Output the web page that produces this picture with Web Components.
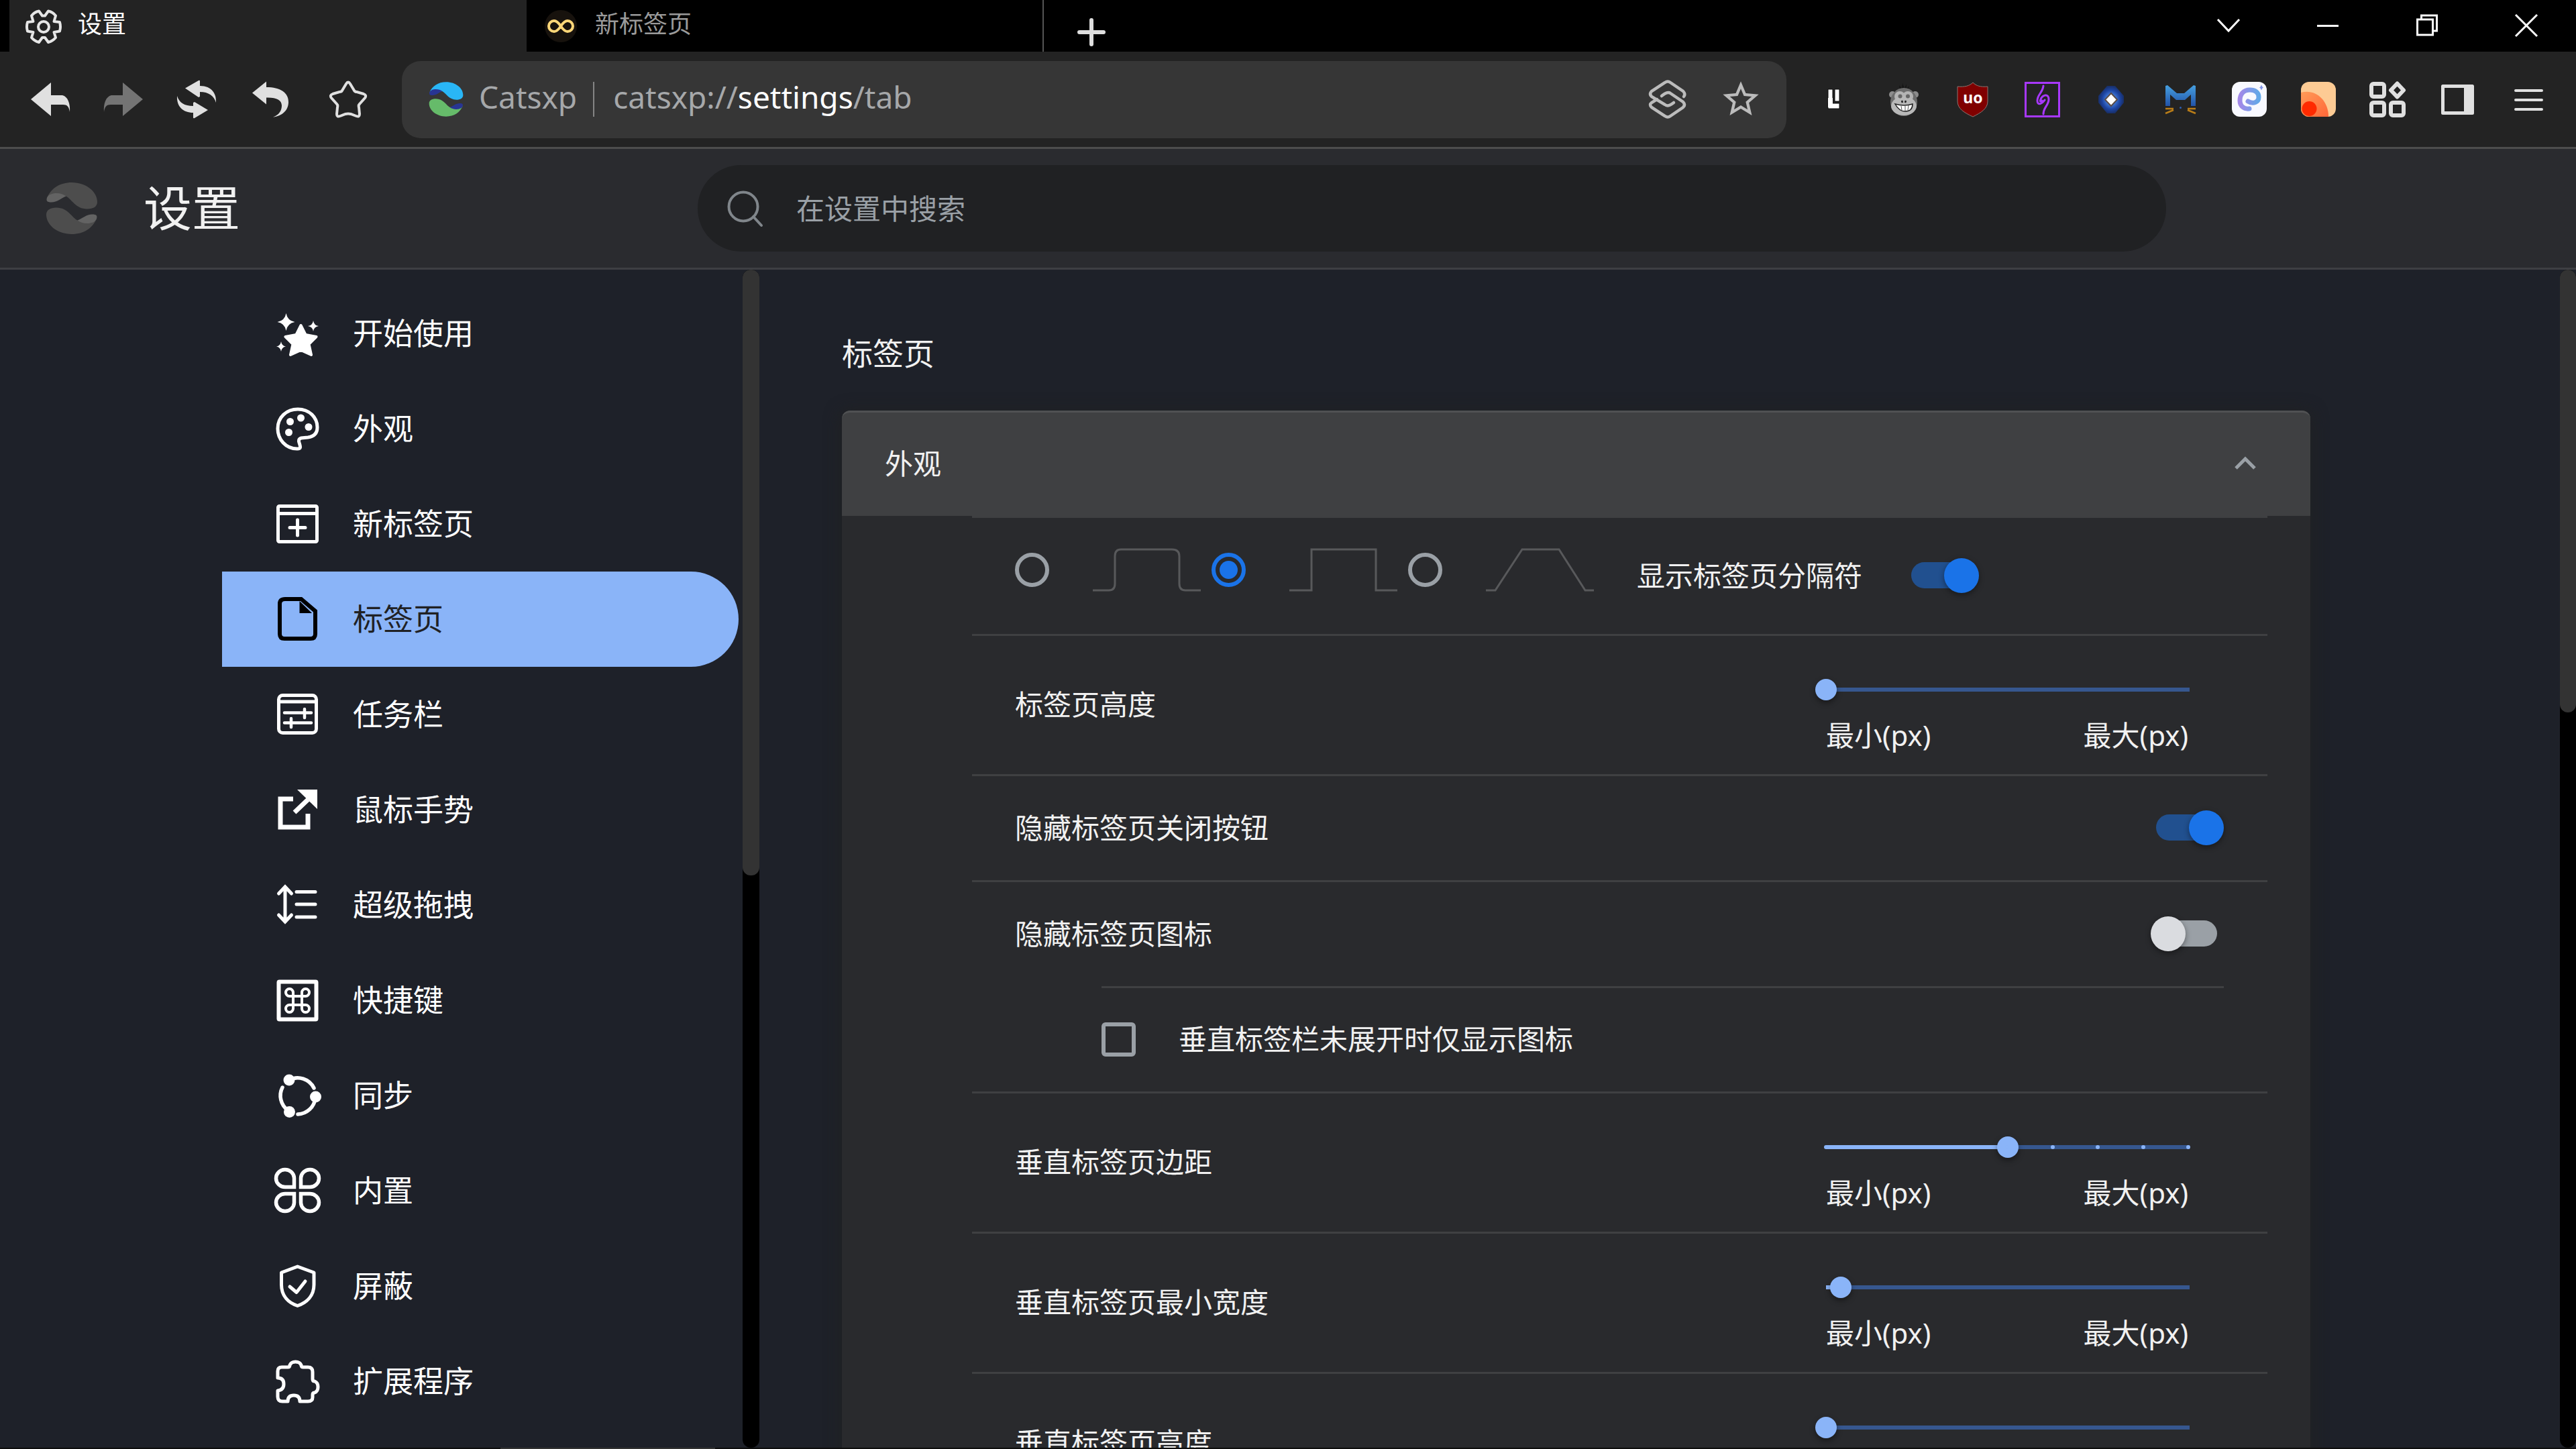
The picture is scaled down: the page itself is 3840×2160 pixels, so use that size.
<!DOCTYPE html>
<html lang="zh-CN">
<head>
<meta charset="utf-8">
<title>设置</title>
<style>
  html, body {
    margin: 0;
    height: 100%;
    background: #1e2129;
  }

  body {
    font-family: "Noto Sans", "Noto Sans CJK SC", sans-serif;
    color: #f1f1f1;
    overflow: hidden;
  }
</style>
</head>
<body>
<settings-app></settings-app>

<script>
const ICONS = {
  gear: `<g fill="none" stroke="#e6e6e6" stroke-width="4" stroke-linejoin="round"><path d="M25 9.5L30 16.5H34L39 9.5Q46 11 50 16.5L47.500 25L56 26Q58 32.500 56 39.500L47.500 41L50 49Q46 54 39 56L34 49H30L25 56Q18 54 14 49L16.500 41L8 39.500Q6 32.500 8 26L16.500 25L14 16.500Q18 11 25 9.500Z"/><circle cx="32" cy="33" r="8"/></g>`,
  infinity: `<circle cx="32" cy="32" r="24" fill="#17120d"/><path d="M32 32C28 26 25 24 22 24a8 8 0 0 0 0 16c3 0 6-2 10-8s7-8 10-8a8 8 0 0 1 0 16c-3 0-6-2-10-8z" fill="none" stroke="#ffd778" stroke-width="4"/>`,
  plus: `<path d="M32 14v36M14 32h36" stroke="#dedede" stroke-width="6" stroke-linecap="round"/>`,
  down: `<path d="M16 22l16 17 16-17" fill="none" stroke="#fff" stroke-width="3"/>`,
  minimize: `<path d="M16 31.500h32" stroke="#fff" stroke-width="3"/>`,
  restore: `<path d="M17.500 22h23v23h-23zM23.500 21v-5h23v23h-5" fill="none" stroke="#fff" stroke-width="3"/>`,
  close: `<path d="M16 15l32 32M48 15L16 47" stroke="#fff" stroke-width="3"/>`,
  back: `<path d="M3 32L33 7v19h17c8 2 12 12 11 25-1-8-4-11-10-11H33v17z" fill="#e0e0e0"/>`,
  forward: `<path d="M61 32L31 7v19H14C6 28 2 38 3 51c1-8 4-11 10-11h18v17z" fill="#747474"/>`,
  reload: `<path d="M15 15.500L35 4q2-1 2 1v7c18 0 25 12 24 25-3-10-11-16-24-16v7l-2 1zM49 48L29 60q-2 1-2-1v-7C12 52 2 43 3 27c3 10 11 15 24 15v-5l2-1z" fill="#e0e0e0"/>`,
  undo: `<path d="M6 22.500L27 5.500V14c21 0 33 8 33 22 0 13-10 21-23 22.500 9-3 13-10 13-17C50 33 42 29 27 29.500v10z" fill="#e0e0e0"/>`,
  favorite: `<path d="M29 9q3-5 6 0l6 10q1 2 4 2l10 3q5 2 2 6l-8 9q-2 2-1 5l1 10q0 5-5 3l-8-3q-4-1-8 0l-8 3q-5 2-5-3l1-10q1-3-1-5l-8-9q-3-4 2-6l10-3q3 0 4-2z" fill="none" stroke="#e0e0e0" stroke-width="4"/>`,
  leo: `<path d="M56 28q3-4-1-8L36 7q-4-3-8 0L8 20q-4 4 0 8l20 12q4 4 13-3M23 27q9-7 13-4l19 13q4 4 0 8L36 57q-4 3-8 0L8 44q-4-4 0-7l8-5" fill="none" stroke="#bcbcbc" stroke-width="4.500" stroke-linecap="round"/>`,
  bookmark: `<path transform="scale(2.667)" fill="#bcbcbc" d="M22 9.240l-7.190-.620L12 2 9.190 8.630 2 9.240l5.460 4.730L5.820 21 12 17.270 18.180 21l-1.630-7.030L22 9.240zM12 15.400l-3.760 2.270 1-4.280-3.320-2.880 4.380-.380L12 6.100l1.710 4.040 4.380.380-3.320 2.880 1 4.280L12 15.400z"/>`,
  blocks: `<g fill="#fff" stroke="#0c0c0c" stroke-width="1"><rect x="22" y="17" width="7" height="24"/><rect x="32" y="17" width="7" height="18"/><rect x="22" y="38" width="17" height="8"/></g><rect x="22" y="30" width="7" height="14" fill="#fff"/>`,
  monkey: `<g><path d="M26 18l-1-7 4 5 1-8 3 8 3-7 0 8 4-5-2 8z" fill="#161616"/><circle cx="15" cy="25" r="5" fill="#8c8c8c"/><circle cx="49" cy="25" r="5" fill="#8c8c8c"/><ellipse cx="32" cy="36" rx="20" ry="21" fill="#6d6d6d"/><circle cx="26" cy="28" r="8" fill="#b4b4b4"/><circle cx="38" cy="28" r="8" fill="#b4b4b4"/><ellipse cx="32" cy="42" rx="19" ry="14" fill="#b8b8b8"/><circle cx="26.500" cy="27.500" r="3" fill="#666"/><circle cx="38" cy="27.500" r="3" fill="#666"/><path d="M29 34l1 3M35 34l-1 3" stroke="#222" stroke-width="2.500"/><path d="M19 39q14 4 26 0 0 11-11 11-9 0-15-11z" fill="#fff" stroke="#222" stroke-width="1.500"/><path d="M28 42l1 6M34 42v7M39 41l-1 7" stroke="#555" stroke-width="1"/></g>`,
  shieldRed: `<path d="M32 7c5 5 11 7 22 6v22c0 11-10 17-22 23C19 52 9 46 9 35V13c11 1 18-1 23-6z" fill="#800000" stroke="#8d7470" stroke-width="1"/><text x="32" y="38" font-family="Noto Sans" font-weight="700" font-size="23" text-anchor="middle" fill="#fff">uo</text>`,
  swirl: `<g fill="none" stroke="#a838ff" stroke-width="3"><rect x="7.500" y="7.500" width="50" height="50"/><path d="M34 12C33 22 25 25 25 34c0 8 7 5 11-1M34 54c0-10 8-13 8-22s-9-7-12 0q-2 5 2 2" stroke-linecap="round"/></g>`,
  diamond: `<defs><radialGradient id="g"><stop offset=".3" stop-color="#4a8af0"/><stop offset=".7" stop-color="#1c48b0"/><stop offset="1" stop-color="#17306f"/></radialGradient></defs><path d="M26 12h12l13 15v10L38 53H26L13 37V27z" fill="url(#g)" opacity=".9"/><path d="M32 23l9 9.500-9 9.500-9-9.500z" fill="#fff" stroke="#5a4c48" stroke-width="2"/>`,
  cat: `<defs><linearGradient id="g" x2="0" y2="1"><stop stop-color="#46a0e0"/><stop offset="1" stop-color="#2253a8"/></linearGradient></defs><path d="M10 42V12l3-1 14 12h11l14-12 3 1v30h-7V25l-9 8H26l-9-8v17z" fill="url(#g)"/><path d="M10 46h12M22 48l-12 5M55 46H43M43 48l12 5" stroke="#b87c18" stroke-width="2.500"/><circle cx="32.500" cy="44.500" r="1.500" fill="#2d5fb4"/>`,
  spiral: `<defs><linearGradient id="g"><stop stop-color="#a288e8"/><stop offset="1" stop-color="#62a8e8"/></linearGradient></defs><rect x="6" y="6" width="52" height="52" rx="12" fill="#f8f9ff"/><path d="M30 35c8 5 16 1 16-6 0-8-6-11-13-11-10 0-15 7-15 16 0 8 6 13 14 12" fill="none" stroke="url(#g)" stroke-width="7" stroke-linecap="round"/><path d="M50 10.500l1.500 3 1.500 1-1.500 1-1.500 3-1.500-3-1.500-1 1.500-1z" fill="#8296e8"/>`,
  sunset: `<defs><clipPath id="c"><rect x="6" y="6" width="52" height="52" rx="12"/></clipPath><linearGradient id="g" x2="1" y2="1"><stop stop-color="#ff9b58"/><stop offset="1" stop-color="#ff6638"/></linearGradient></defs><g clip-path="url(#c)"><path d="M6 6h52v52H6z" fill="#fdcb94"/><path d="M6 22c22-6 42 12 41 38H6z" fill="url(#g)"/><circle cx="18.500" cy="46" r="11" fill="#ff2a00"/></g>`,
  apps: `<g fill="none" stroke="#e0e0e0" stroke-width="6"><rect x="8" y="9" width="19" height="19" rx="3"/><rect x="8" y="37" width="19" height="19" rx="3"/><rect x="37" y="37" width="19" height="19" rx="3"/><path d="M46.500 8.500l9.500 10-9.500 10-9.500-10z" stroke-linejoin="round"/></g>`,
  sidebar: `<path d="M10.500 12.500h44v40h-44z" fill="none" stroke="#e0e0e0" stroke-width="5" stroke-linejoin="round"/><path d="M42 12h13v41H42z" fill="#e0e0e0"/>`,
  menu: `<path d="M13 19h39M13 33h39M13 47h39" stroke="#e0e0e0" stroke-width="4" stroke-linecap="round"/>`,
  search: `<g fill="none" stroke="#80868b" stroke-width="4"><circle cx="29" cy="29" r="21.500"/><path d="M44 44l12 13" stroke-linecap="round"/></g>`,
  collapse: `<path d="M18 39l14-14 14 14" fill="none" stroke="#9aa0a6" stroke-width="5"/>`,
  start: `<path d="M37.500 20l7 14 16 3-11 11 3.500 16-15.500-7-15.500 7 3.500-16-11-11 16-3z" fill="currentColor" stroke="currentColor" stroke-width="4" stroke-linejoin="round"/><path d="M15.500 2q2 11 13 13-11 2-13 13-2-11-13-13 11-2 13-13zM56 13q1 7 8 8-7 1-8 8-1-7-8-8 7-1 8-8zM8 44q1 6.500 7 7.500-6 1-7 7.500-1-6.500-7-7.500 6-1 7-7.500z" fill="currentColor"/>`,
  palette: `<path d="M3 32C3 15 16 3 33 3c17 0 29 12 29 27 0 11-7 14-14 15l-10 1c-4 1-4 4-3 7 2 6 3 9-3 9C15 62 3 48 3 32z" fill="none" stroke="currentColor" stroke-width="5"/><g fill="currentColor"><circle cx="21.500" cy="21.500" r="5.500"/><circle cx="37.500" cy="16" r="5.500"/><circle cx="49" cy="29.500" r="5.500"/><circle cx="19.500" cy="37.500" r="5.500"/></g>`,
  newtab: `<g fill="none" stroke="currentColor" stroke-width="5"><rect x="3.500" y="5.500" width="58" height="53" rx="2"/><path d="M4 16.500h57"/><path d="M32.500 26v23M21 37.500h23" stroke-linecap="round"/></g>`,
  tab: `<path d="M14 2h24l21 18v34q0 7-7 7H13q-7 0-7-7V9q0-7 8-7z" fill="none" stroke="#000" stroke-width="6"/><path d="M35.500 5v18H54z" fill="#000"/>`,
  taskbar: `<g fill="none" stroke="currentColor" stroke-width="5"><rect x="4.500" y="3.500" width="56" height="56" rx="6"/><path d="M7 13h51"/><path d="M13 29.500h40M43 24v13M13 44.500h40M23 38v13" stroke-linecap="round" stroke-width="4.500"/></g>`,
  gesture: `<path d="M26 16H7v42h41V38M28 36l20-19" fill="none" stroke="currentColor" stroke-width="7"/><path d="M32 2h30v29z" fill="currentColor"/>`,
  drag: `<path d="M14 5v52M4.500 15L14 5l9.500 10M4.500 47L14 57l9.500-10M31 12.500h28M31 31h28M31 50h28" fill="none" stroke="currentColor" stroke-width="5" stroke-linecap="round"/>`,
  shortcut: `<g fill="none" stroke="currentColor"><rect x="4.500" y="4.500" width="56" height="56" rx="1" stroke-width="6"/><path d="M26 26h-5.500a5.500 5.500 0 1 1 5.500-5.500v24a5.500 5.500 0 1 1-5.500-5.500h24a5.500 5.500 0 1 1-5.500 5.500v-24a5.500 5.500 0 1 1 5.500 5.500z" stroke-width="4"/></g>`,
  sync: `<path d="M20 9a27 27 0 0 1 37 12M59 36a27 27 0 0 1-26 24M10 20a27 27 0 0 0 8 34" fill="none" stroke="currentColor" stroke-width="5.500" stroke-linecap="round"/><g fill="currentColor"><circle cx="20" cy="9" r="8.500"/><circle cx="59.500" cy="34" r="8.500"/><circle cx="20.500" cy="56.500" r="8.500"/></g>`,
  clover: `<path d="M27.500 26.500H14A13.500 13 0 1 1 27.500 13zM37.500 26.500H51A13.500 13 0 1 0 37.500 13zM27.500 36.500H14A13.500 13 0 1 0 27.500 50zM37.500 36.500H51A13.500 13 0 1 1 37.500 50z" fill="none" stroke="currentColor" stroke-width="5.500"/>`,
  shield: `<path d="M32.500 3L57 12v18c0 17-11 27-24.500 31.500C19 57 8.500 47 8.500 30V12zM21 33l10 8.500L44 25" fill="none" stroke="currentColor" stroke-width="5" stroke-linecap="round" stroke-linejoin="round"/>`,
  puzzle: `<path d="M9 11h9q3 0 3-3 2-5 8.500-5T38 8q0 3 3 3h7q7 0 7 7v11q0 3 3 3 5 2 5 8.500T58 49q-3 0-3 3v4q0 6-7 6H36q0-9-9-9t-9 9h-8q-7 0-7-7V46q9-1 9-10t-9-9V17q0-6 6-6z" fill="none" stroke="currentColor" stroke-width="5" stroke-linejoin="round"/>`
};

class UiIcon extends HTMLElement {
  connectedCallback() {
    this.attachShadow({ mode: 'open' }).innerHTML = `
      <style>
        :host { display: block; flex: none; width: 64px; height: 64px; }
        svg { display: block; width: 100%; height: 100%; overflow: visible; }
      </style>
      <svg viewBox="0 0 64 64" aria-hidden="true">${ICONS[this.getAttribute('name')]}</svg>`;
  }
}

class BrandLogo extends HTMLElement {
  connectedCallback() {
    this.attachShadow({ mode: 'open' }).innerHTML = `
      <style>
        :host { display: block; flex: none; width: 78px; height: 77px; }
        svg { display: block; width: 100%; height: 100%; }
        .top { fill: var(--logo-top, #4d4d4d); }
        .bottom { fill: var(--logo-bottom, #4d4d4d); }
        .fold { fill: var(--logo-fold, #636363); }
      </style>
      <svg viewBox="0 0 78 77" aria-hidden="true">
        <defs>
          <path id="wing" d="M2 23C8 9 21 0 39 0c22 0 38 14 38 29 0 7-6 10.500-15 10.500C45 39.500 39 25 30.500 20.500z"/>
          <path id="fold" d="M2 23c2-5 8-7 14-7 6 0 11 2 14.500 4.500-8 3-13 9-22 9-6 0-8-2-6.500-6.500z"/>
        </defs>
        <use href="#wing" class="top"/><use href="#fold" class="fold"/>
        <g transform="rotate(180 39 38.500)"><use href="#wing" class="bottom"/><use href="#fold" class="fold"/></g>
      </svg>`;
  }
}

class IconButton extends HTMLElement {
  connectedCallback() {
    this.attachShadow({ mode: 'open' }).innerHTML = `
      <style>
        :host { display: flex; flex: none; width: 103px; }
        button {
          flex: 1;
          display: flex;
          align-items: center;
          justify-content: center;
          padding: 0;
          border: 0;
          background: none;
        }
      </style>
      <button type="button" aria-label="${this.getAttribute('label')}">
        <ui-icon name="${this.getAttribute('icon')}"></ui-icon>
      </button>`;
  }
}

class TabStrip extends HTMLElement {
  connectedCallback() {
    this.attachShadow({ mode: 'open' }).innerHTML = `
      <style>
        :host { display: flex; height: 77px; padding-left: 14px; background: #000; }
        .tab {
          flex: 0 1 771px;
          display: flex;
          align-items: center;
          gap: 19px;
          padding: 0 19px;
          border: 0;
          background: none;
          color: #9a9a9a;
          font: inherit;
          font-size: 36px;
          line-height: 56px;
        }
        .tab span { padding-bottom: 6px; }
        .tab[aria-selected="true"] { background: #232323; color: #fff; }
        .tab:last-of-type { border-right: 2px solid #555; }
        .tabs { display: contents; }
        .add { width: 142px; padding-top: 18px; }
        .window { display: flex; margin-left: auto; }
        .window icon-button { width: 148px; }
      </style>
      <div class="tabs" role="tablist">
        <button class="tab" role="tab" aria-selected="true"><ui-icon name="gear"></ui-icon><span>设置</span></button>
        <button class="tab" role="tab" aria-selected="false"><ui-icon name="infinity"></ui-icon><span>新标签页</span></button>
      </div>
      <icon-button class="add" icon="plus" label="打开新标签页"></icon-button>
      <div class="window">
        <icon-button icon="down" label="搜索标签页"></icon-button>
        <icon-button icon="minimize" label="最小化"></icon-button>
        <icon-button icon="restore" label="还原"></icon-button>
        <icon-button icon="close" label="关闭"></icon-button>
      </div>`;
  }
}

class BrowserToolbar extends HTMLElement {
  connectedCallback() {
    const buttons = (list) => list.map(([icon, label]) =>
      `<icon-button icon="${icon}" label="${label}"></icon-button>`).join('');

    this.attachShadow({ mode: 'open' }).innerHTML = `
      <style>
        :host {
          display: flex;
          height: 142px;
          padding: 0 18px 0 20px;
          align-items: center;
          background: #232323;
          border-bottom: 3px solid #4d4d4d;
        }
        .nav, .extensions, .app { display: flex; }
        .nav icon-button { width: 109px; }
        .nav icon-button:last-child { padding-left: 8px; }
        .app icon-button { width: 106px; }
        .url {
          flex: 1;
          display: flex;
          align-items: center;
          height: 115px;
          margin: 0 20px 0 26px;
          padding: 0 14px 0 40px;
          border-radius: 28px;
          background: #363636;
          color: #a6a8aa;
          font-size: 46px;
          line-height: 64px;
        }
        .url brand-logo {
          width: 52px;
          height: 52px;
          --logo-top: #29b6f6;
          --logo-bottom: #66bb6a;
          --logo-fold: #283593;
        }
        .name { margin-left: 23px; padding-right: 24px; }
        .address {
          flex: 1;
          padding-left: 30px;
          background: linear-gradient(#858585, #858585) no-repeat left center / 2px 52px;
        }
        .name span, .address span { display: inline-block; padding-bottom: 8px; }
        b { font-weight: 400; color: #fff; }
        .url icon-button { width: 109px; }
      </style>
      <div class="nav">${buttons([['back', '后退'], ['forward', '前进'], ['reload', '重新加载'], ['undo', '恢复'], ['favorite', '收藏']])}</div>
      <div class="url">
        <brand-logo></brand-logo>
        <div class="name"><span>Catsxp</span></div>
        <div class="address" role="textbox" aria-label="地址栏"><span>catsxp://<b>settings</b>/tab</span></div>
        ${buttons([['leo', '助手'], ['bookmark', '书签']])}
      </div>
      <div class="extensions">${buttons([['blocks', '扩展 1'], ['monkey', '扩展 2'], ['shieldRed', '扩展 3'], ['swirl', '扩展 4'], ['diamond', '扩展 5'], ['cat', '扩展 6'], ['spiral', '扩展 7'], ['sunset', '扩展 8'], ['apps', '扩展程序']])}</div>
      <div class="app">${buttons([['sidebar', '侧边栏'], ['menu', '菜单']])}</div>`;
  }
}

class SettingsHeader extends HTMLElement {
  connectedCallback() {
    this.attachShadow({ mode: 'open' }).innerHTML = `
      <style>
        :host {
          display: grid;
          grid-template-columns: 1040px minmax(0, 2189px);
          align-items: center;
          height: 177px;
          background: #2a2b2f;
          border-bottom: 3px solid #3e3f43;
        }
        .brand { display: flex; align-items: center; gap: 68px; padding-left: 68px; }
        h1 { margin: 0; padding-bottom: 4px; font-size: 72px; line-height: 96px; font-weight: 400; }
        label {
          display: flex;
          align-items: center;
          gap: 44px;
          height: 129px;
          padding-left: 39px;
          border-radius: 65px;
          background: #202123;
        }
        input {
          flex: 1;
          min-width: 0;
          padding: 0;
          border: 0;
          outline: 0;
          background: none;
          color: inherit;
          font: inherit;
          font-size: 42px;
          line-height: 64px;
        }
        input::placeholder { color: #9aa0a6; opacity: 1; }
      </style>
      <div class="brand"><brand-logo></brand-logo><h1>设置</h1></div>
      <label><ui-icon name="search"></ui-icon><input type="search" placeholder="在设置中搜索" aria-label="在设置中搜索"></label>`;
  }
}

// Scroll rail; --thumb is the share of the rail that the thumb covers
class ScrollRail extends HTMLElement {
  connectedCallback() {
    this.attachShadow({ mode: 'open' }).innerHTML = `
      <style>
        :host { display: block; flex: none; width: 24px; background: #000; border-radius: 12px; }
        div { height: var(--thumb); background: #333; border-radius: 12px; }
      </style>
      <div></div>`;
  }
}

class SettingsMenu extends HTMLElement {
  connectedCallback() {
    const items = [
      ['start', '开始使用'], ['palette', '外观'], ['newtab', '新标签页'], ['tab', '标签页'],
      ['taskbar', '任务栏'], ['gesture', '鼠标手势'], ['drag', '超级拖拽'], ['shortcut', '快捷键'],
      ['sync', '同步'], ['clover', '内置'], ['shield', '屏蔽'], ['puzzle', '扩展程序']
    ];

    this.attachShadow({ mode: 'open' }).innerHTML = `
      <style>
        :host { display: flex; min-height: 0; overflow: hidden; }
        nav { flex: 1; padding: 24px 6px 0 331px; }
        a {
          display: flex;
          align-items: center;
          gap: 51px;
          height: 142px;
          box-sizing: border-box;
          padding-left: 80px;
          border-radius: 0 71px 71px 0;
          color: #fff;
          font-size: 45px;
          line-height: 64px;
          text-decoration: none;
        }
        a[aria-current] { background: #8ab4f8; color: #202124; }
        scroll-rail { width: 25px; --thumb: 51.4%; }
      </style>
      <nav>${items.map(([icon, text]) => `
        <a href="#${icon}" ${icon === 'tab' ? 'aria-current="page"' : ''}><ui-icon name="${icon}"></ui-icon>${text}</a>`).join('')}
      </nav>
      <scroll-rail></scroll-rail>`;
  }
}

const toggleStyles = `
  input[role="switch"] {
    appearance: none;
    flex: none;
    display: flex;
    align-items: center;
    width: 91px;
    height: 39px;
    margin: 0;
    border-radius: 20px;
    background: #9aa0a6;
  }
  input[role="switch"]::before {
    content: "";
    width: 52px;
    height: 52px;
    flex: none;
    margin-left: -8px;
    border-radius: 50%;
    background: #dadce0;
    box-shadow: 0 3px 8px rgba(0, 0, 0, 0.4);
  }
  input[role="switch"]:checked { background: #21508f; }
  input[role="switch"]:checked::before { margin-left: 49px; background: #1a73e8; }
`;

class TabShapeRow extends HTMLElement {
  connectedCallback() {
    const shapes = [
      ['圆角', 'M0 63h24q9 0 9-10V12q0-10 9-10h76q11 0 11 10v41q0 10 9 10h23'],
      ['直角', 'M0 63h33V2h96v61h32'],
      ['梯形', 'M0 63h14L54 2h55l39 61h13']
    ];

    this.attachShadow({ mode: 'open' }).innerHTML = `
      <style>
        ${toggleStyles}
        :host {
          display: flex;
          align-items: center;
          height: 173px;
          padding: 0 64px;
          border-top: 3px solid #3f4042;
        }
        .shapes { display: flex; gap: 16px; padding-bottom: 18px; }
        .shapes label { display: flex; align-items: center; gap: 65px; }
        svg { display: block; width: 161px; height: 65px; }
        path { fill: none; stroke: #58595b; stroke-width: 3; }
        input[type="radio"] {
          appearance: none;
          display: grid;
          place-items: center;
          box-sizing: border-box;
          width: 51px;
          height: 51px;
          margin: 0;
          border: 6px solid #9aa0a6;
          border-radius: 50%;
        }
        input[type="radio"]:checked { border-color: #1a73e8; }
        input[type="radio"]:checked::before {
          content: "";
          width: 27px;
          height: 27px;
          border-radius: 50%;
          background: #1a73e8;
        }
        .separator {
          display: flex;
          align-items: center;
          gap: 73px;
          margin-left: 64px;
          padding-bottom: 2px;
          font-size: 42px;
          line-height: 64px;
        }
      </style>
      <div class="shapes" role="radiogroup" aria-label="标签页形状">${shapes.map(([name, d], i) => `
        <label><input type="radio" name="shape" aria-label="${name}" ${i === 1 ? 'checked' : ''}><svg viewBox="0 0 161 65"><path d="${d}"/></svg></label>`).join('')}
      </div>
      <label class="separator">显示标签页分隔符<input type="checkbox" role="switch" checked></label>`;
  }
}

class ToggleRow extends HTMLElement {
  connectedCallback() {
    this.attachShadow({ mode: 'open' }).innerHTML = `
      <style>
        ${toggleStyles}
        :host { display: block; border-top: 3px solid #3f4042; }
        label {
          display: flex;
          align-items: center;
          justify-content: space-between;
          height: 153px;
          padding: 0 75px 2px 64px;
          font-size: 42px;
          line-height: 64px;
        }
        ::slotted(*) { margin: 0 65px 0 193px; }
      </style>
      <label>${this.getAttribute('label')}<input type="checkbox" role="switch" ${this.hasAttribute('checked') ? 'checked' : ''}></label>
      <slot></slot>`;
  }
}

class CheckRow extends HTMLElement {
  connectedCallback() {
    this.attachShadow({ mode: 'open' }).innerHTML = `
      <style>
        :host { display: block; border-top: 3px solid #3f4042; }
        label {
          display: flex;
          align-items: center;
          gap: 64px;
          height: 152px;
          padding-bottom: 2px;
          font-size: 42px;
          line-height: 64px;
        }
        input {
          appearance: none;
          box-sizing: border-box;
          width: 51px;
          height: 51px;
          margin: 0;
          border: 6px solid #9aa0a6;
          border-radius: 6px;
        }
      </style>
      <label><input type="checkbox"><slot></slot></label>`;
  }
}

class SliderRow extends HTMLElement {
  connectedCallback() {
    const value = Number(this.getAttribute('value'));
    const ticks = Number(this.getAttribute('ticks') || 0);

    this.attachShadow({ mode: 'open' }).innerHTML = `
      <style>
        :host {
          display: flex;
          justify-content: space-between;
          align-items: center;
          height: 206px;
          padding: 0 100px 0 64px;
          border-top: 3px solid #3f4042;
        }
        label { padding-bottom: 2px; font-size: 42px; line-height: 64px; }
        .slider { display: grid; width: 574px; padding-top: 38px; }
        input, .ticks { grid-area: 1 / 1; }
        input {
          appearance: none;
          width: 100%;
          height: 32px;
          margin: 0;
          background:
            linear-gradient(#8ab4f8, #8ab4f8) no-repeat 16px 13px / calc((100% - 32px) * ${value / 100}) 6px,
            linear-gradient(#36578f, #36578f) no-repeat 16px 13px / calc(100% - 32px) 6px;
        }
        input::-webkit-slider-thumb {
          appearance: none;
          width: 32px;
          height: 32px;
          border-radius: 50%;
          background: #8ab4f8;
          box-shadow: 0 4px 8px rgba(0, 0, 0, 0.4);
        }
        .ticks {
          display: flex;
          justify-content: space-between;
          align-items: center;
          padding: 0 15px 0 13px;
          pointer-events: none;
        }
        .ticks i { width: 6px; height: 6px; border-radius: 50%; background: #8ab4f8; }
        .bounds {
          display: flex;
          justify-content: space-between;
          padding: 20px 18px 0 16px;
          font-size: 42px;
          line-height: 64px;
        }
      </style>
      <label for="range">${this.getAttribute('label')}</label>
      <div class="slider">
        <input id="range" type="range" min="0" max="100" step="any" value="${value}">
        <div class="ticks">${'<i></i>'.repeat(ticks)}</div>
        <div class="bounds"><span>最小(px)</span><span>最大(px)</span></div>
      </div>`;
  }
}

class SettingsCard extends HTMLElement {
  connectedCallback() {
    this.attachShadow({ mode: 'open' }).innerHTML = `
      <style>
        :host {
          display: block;
          border-radius: 12px;
          background: #292a2d;
          box-shadow: 0 3px 20px 6px rgba(32, 33, 36, 0.9);
        }
        button {
          display: flex;
          align-items: center;
          justify-content: space-between;
          width: 100%;
          height: 157px;
          padding: 0 65px 2px 64px;
          border: 0;
          border-top: 3px solid #505153;
          border-radius: 12px 12px 0 0;
          background: #3f4042;
          color: inherit;
          font: inherit;
          font-size: 42px;
          line-height: 64px;
        }
        .rows { padding: 0 64px 0 194px; }
      </style>
      <button type="button" aria-expanded="true">${this.getAttribute('label')}<ui-icon name="collapse"></ui-icon></button>
      <div class="rows"><slot></slot></div>`;
  }
}

class SettingsPage extends HTMLElement {
  connectedCallback() {
    this.attachShadow({ mode: 'open' }).innerHTML = `
      <style>
        :host { display: flex; min-width: 0; min-height: 0; overflow: hidden; }
        main { flex: 1; min-width: 0; padding: 94px 123px 0; }
        section { max-width: 2189px; }
        h2 { margin: 0 0 56px; font-size: 46px; line-height: 60px; font-weight: 400; }
        scroll-rail { --thumb: 37.6%; }
      </style>
      <main>
        <section>
          <h2>标签页</h2>
          <settings-card label="外观">
            <tab-shape-row></tab-shape-row>
            <slider-row label="标签页高度" value="0"></slider-row>
            <toggle-row label="隐藏标签页关闭按钮" checked></toggle-row>
            <toggle-row label="隐藏标签页图标">
              <check-row>垂直标签栏未展开时仅显示图标</check-row>
            </toggle-row>
            <slider-row label="垂直标签页边距" value="50" ticks="9"></slider-row>
            <slider-row label="垂直标签页最小宽度" value="4"></slider-row>
            <slider-row label="垂直标签页高度" value="0"></slider-row>
          </settings-card>
        </section>
      </main>
      <scroll-rail></scroll-rail>`;
  }
}

class SettingsApp extends HTMLElement {
  connectedCallback() {
    this.attachShadow({ mode: 'open' }).innerHTML = `
      <style>
        :host { display: flex; flex-direction: column; height: 100vh; }
        .content {
          flex: 1;
          min-height: 0;
          display: grid;
          grid-template-columns: 1132px minmax(0, 1fr);
          grid-template-rows: minmax(0, 1fr);
        }
        .edge { height: 2px; padding-left: 746px; background: #0d0d0d; }
        .edge div { width: 320px; height: 2px; background: #333; }
      </style>
      <tab-strip></tab-strip>
      <browser-toolbar></browser-toolbar>
      <settings-header></settings-header>
      <div class="content">
        <settings-menu></settings-menu>
        <settings-page></settings-page>
      </div>
      <div class="edge"><div></div></div>`;
  }
}

customElements.define('ui-icon', UiIcon);
customElements.define('brand-logo', BrandLogo);
customElements.define('icon-button', IconButton);
customElements.define('tab-strip', TabStrip);
customElements.define('browser-toolbar', BrowserToolbar);
customElements.define('settings-header', SettingsHeader);
customElements.define('scroll-rail', ScrollRail);
customElements.define('settings-menu', SettingsMenu);
customElements.define('tab-shape-row', TabShapeRow);
customElements.define('toggle-row', ToggleRow);
customElements.define('check-row', CheckRow);
customElements.define('slider-row', SliderRow);
customElements.define('settings-card', SettingsCard);
customElements.define('settings-page', SettingsPage);
customElements.define('settings-app', SettingsApp);
</script>
</body>
</html>
